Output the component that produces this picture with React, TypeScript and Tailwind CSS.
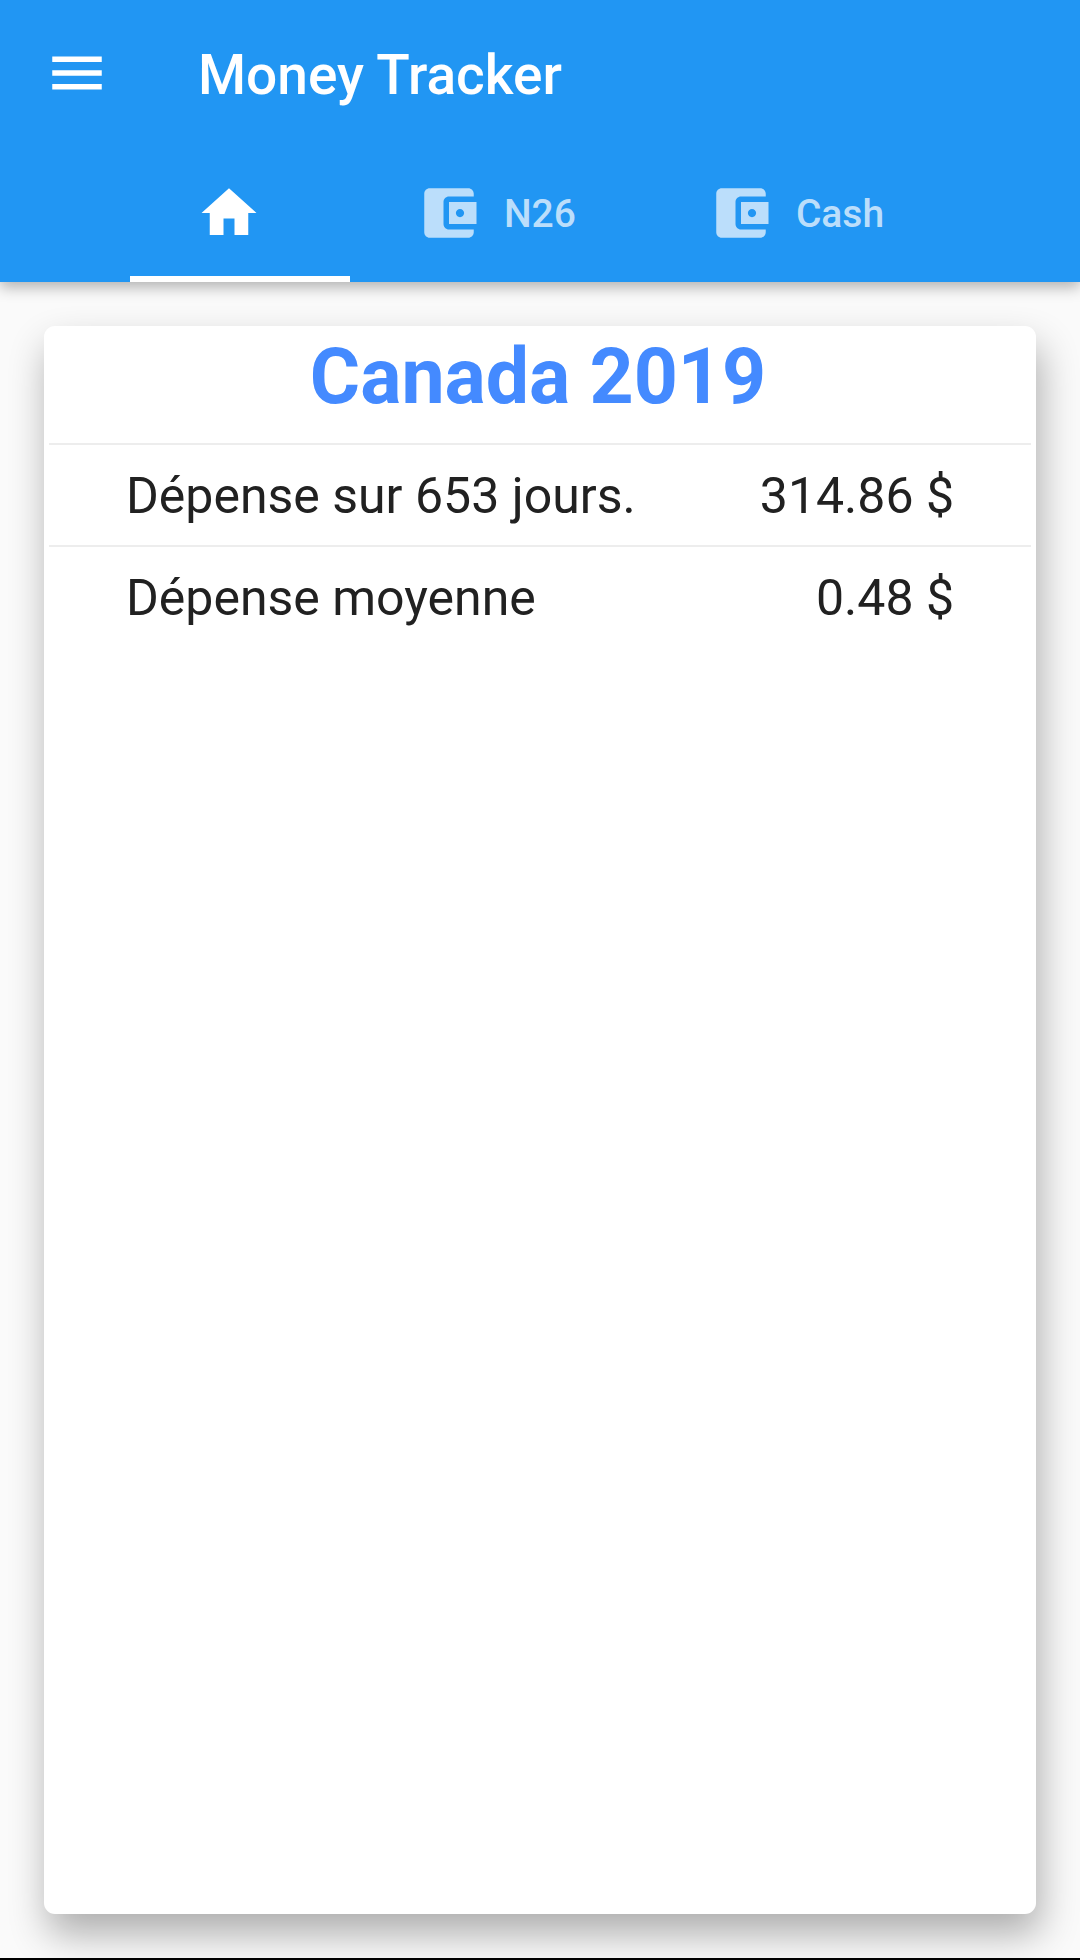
import React from "react";

function MenuIcon() {
  return (
    <svg viewBox="0 0 24 24" className="size-[66px]" fill="currentColor" aria-hidden="true">
      <path d="M3 18h18v-2H3v2zm0-5h18v-2H3v2zm0-7v2h18V6H3z" />
    </svg>
  );
}

function HomeIcon() {
  return (
    <svg viewBox="0 0 24 24" className="size-[66px]" fill="currentColor" aria-hidden="true">
      <path d="M10 20v-6h4v6h5v-8h3L12 3 2 12h3v8z" />
    </svg>
  );
}

function WalletIcon() {
  return (
    <svg viewBox="0 0 24 24" className="size-[66px]" fill="currentColor" aria-hidden="true">
      <path d="M21 18v1c0 1.1-.9 2-2 2H5c-1.11 0-2-.9-2-2V5c0-1.1.89-2 2-2h14c1.1 0 2 .9 2 2v1h-9c-1.11 0-2 .9-2 2v8c0 1.1.89 2 2 2h9zm-9-2h10V8H12v8zm4-2.500c-.83 0-1.500-.67-1.500-1.500s.67-1.500 1.500-1.500 1.500.67 1.500 1.500-.67 1.500-1.500 1.500z" />
    </svg>
  );
}

type TabProps = { icon: React.ReactNode; label?: string; name: string; selected?: boolean };

function Tab({ icon, label, name, selected }: TabProps) {
  return (
    <button
      type="button"
      role="tab"
      aria-selected={!!selected}
      aria-label={name}
      className={`flex h-[132px] items-center gap-[22px] border-b-6 px-[66px] text-[39px] font-medium ${
        selected ? "border-white text-white" : "border-transparent text-[#bbdefb]"
      }`}
    >
      {icon}
      <span className="pt-0.5">{label}</span>
    </button>
  );
}

const rows = [
  { label: "Dépense sur 653 jours.", amount: "314.86 $" },
  { label: "Dépense moyenne", amount: "0.48 $" },
];

export default function App() {
  return (
    <div className="flex min-h-screen flex-col border-b-2 border-black bg-[#fafafa] font-['Roboto',sans-serif] text-[#212121]">
      <header className="relative z-10 bg-[#2196f3] pb-0 text-white shadow-[0_5px_14px_rgba(0,0,0,0.3)]">
        <div className="mb-1 flex h-[146px] items-center gap-[88px] px-11">
          <button type="button" aria-label="Menu">
            <MenuIcon />
          </button>
          <h1 className="pt-1 text-[55px] font-medium">Money Tracker</h1>
        </div>
        <div role="tablist" className="flex justify-center">
          <Tab icon={<HomeIcon />} name="Home" selected />
          <Tab icon={<WalletIcon />} name="N26" label="N26" />
          <Tab icon={<WalletIcon />} name="Cash" label="Cash" />
        </div>
      </header>
      <main className="flex grow flex-col overflow-hidden p-11">
        <section className="grow rounded-[11px] bg-white px-[5px] shadow-[4px_20px_38px_rgba(0,0,0,0.31)]">
          <h2 className="h-[117px] pr-1 text-center text-[77px] leading-[102px] font-bold text-[#448aff]">
            Canada 2019
          </h2>
          <dl>
            {rows.map((row) => (
              <div
                key={row.label}
                className="flex h-[102px] items-center justify-between border-t-2 border-[#ededed] px-[77px] pt-0.5 text-[50px]"
              >
                <dt>{row.label}</dt>
                <dd>{row.amount}</dd>
              </div>
            ))}
          </dl>
        </section>
      </main>
    </div>
  );
}
